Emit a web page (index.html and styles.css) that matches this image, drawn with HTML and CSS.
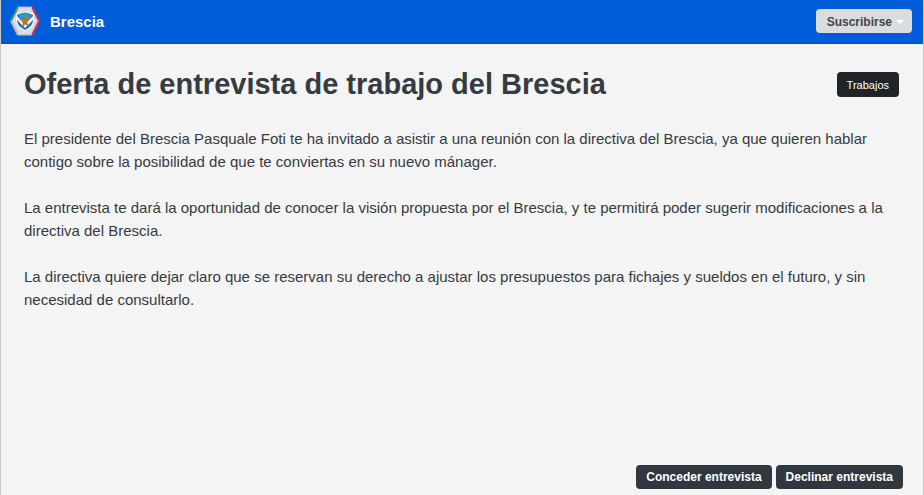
FILE: index.html
```
<!DOCTYPE html>
<html lang="es">
<head>
  <meta charset="UTF-8">
  <meta name="viewport" content="width=device-width, initial-scale=1">
  <title>Oferta de entrevista de trabajo del Brescia</title>
  <link rel="stylesheet" href="styles.css">
</head>
<body>
  <div class="message">
    <header class="topbar">
      <svg class="crest" viewBox="0 0 30 30" aria-hidden="true">
        <path d="M8 1h14l7 14-7 14H8L1 15z" fill="#dcdce0"/>
        <path d="M8 1L1 15" stroke="#35a07c" stroke-width="2"/>
        <path d="M1 15l7 14" stroke="#b9b9c6" stroke-width="2"/>
        <path d="M22 1l7 14-7 14" fill="none" stroke="#d8344a" stroke-width="2"/>
        <path d="M8 1h14M8 29h14" stroke="#b4b8c0"/>
        <path d="M6 8q9-5 18 0v7q-1 7-9 10-8-3-9-10z" fill="#fff"/>
        <path d="M7 9q8-5 16 0v6q-1 6-8 9-7-3-8-9z" fill="#1673c4"/>
        <path d="M7 10l8 8 8-8v4l-8 8-8-8z" fill="#e9f3f8"/>
        <path d="M8 9q7-4 14 0l-2 3H10z" fill="#299bd2"/>
        <path d="M16 9l2 1-1 2 3-1-1 3-2 2 2 4-3-1-1-1-2 4-2 0 2-4-1-3-3-2 3-1 2 1z" fill="#a97a3a"/>
      </svg>
      <span class="club">Brescia</span>
      <button class="subscribe" type="button" aria-haspopup="menu">Suscribirse<span class="caret"></span></button>
    </header>

    <main class="content">
      <div class="heading">
        <h1>Oferta de entrevista de trabajo del Brescia</h1>
        <button class="jobs" type="button">Trabajos</button>
      </div>
      <p>El presidente del Brescia Pasquale Foti te ha invitado a asistir a una reunión con la directiva del Brescia, ya que quieren hablar contigo sobre la posibilidad de que te conviertas en su nuevo mánager.</p>
      <p>La entrevista te dará la oportunidad de conocer la visión propuesta por el Brescia, y te permitirá poder sugerir modificaciones a la directiva del Brescia.</p>
      <p>La directiva quiere dejar claro que se reservan su derecho a ajustar los presupuestos para fichajes y sueldos en el futuro, y sin necesidad de consultarlo.</p>
    </main>

    <footer class="actions">
      <button type="button">Conceder entrevista</button>
      <button type="button">Declinar entrevista</button>
    </footer>
  </div>
</body>
</html>
```
FILE: styles.css
```
* {
  box-sizing: border-box;
}
body {
  margin: 0;
  font-family: "Liberation Sans", Arial, sans-serif;
  background-color: #f4f4f4;
  color: #353b41;
}
.message {
  display: flex;
  flex-direction: column;
  min-height: 100vh;
  border-left: 1px solid #c8c8ca;
  border-right: 1px solid #c8c8ca;
}
.topbar {
  display: flex;
  align-items: center;
  height: 44px;
  padding: 0 11px 1px 9px;
  background-color: #005cd9;
  border-bottom: 1px solid #004db8;
}
.crest {
  width: 30px;
  height: 30px;
}
.club {
  margin-left: 10px;
  font-size: 15px;
  font-weight: bold;
  color: #fff;
}
button {
  border: none;
  border-radius: 4px;
  font-family: inherit;
  cursor: pointer;
}
.subscribe {
  display: flex;
  align-items: center;
  gap: 4px;
  height: 24px;
  margin-left: auto;
  padding: 2px 8px 0 11px;
  background-color: #dadce0;
  color: #41464c;
  font-size: 12px;
  font-weight: bold;
}
.caret {
  border: 4px solid transparent;
  border-top-color: #fff;
  border-bottom: none;
}
.content {
  flex: 1;
  padding: 23px 24px 23px 23px;
}
.heading {
  display: flex;
  justify-content: space-between;
  align-items: center;
  margin-bottom: 25px;
}
h1 {
  margin: 0;
  font-size: 29px;
  line-height: 35px;
}
.jobs {
  height: 25px;
  padding: 0 10px;
  background-color: #202428;
  color: #fff;
  font-size: 11px;
}
p {
  margin: 0 0 23px;
  font-size: 15px;
  line-height: 23px;
}
.actions {
  display: flex;
  justify-content: flex-end;
  gap: 4px;
  padding: 0 20px 6px;
}
.actions button {
  height: 24px;
  padding: 0 10px;
  background-color: #31373f;
  color: #fff;
  font-size: 12px;
  font-weight: bold;
}
```
